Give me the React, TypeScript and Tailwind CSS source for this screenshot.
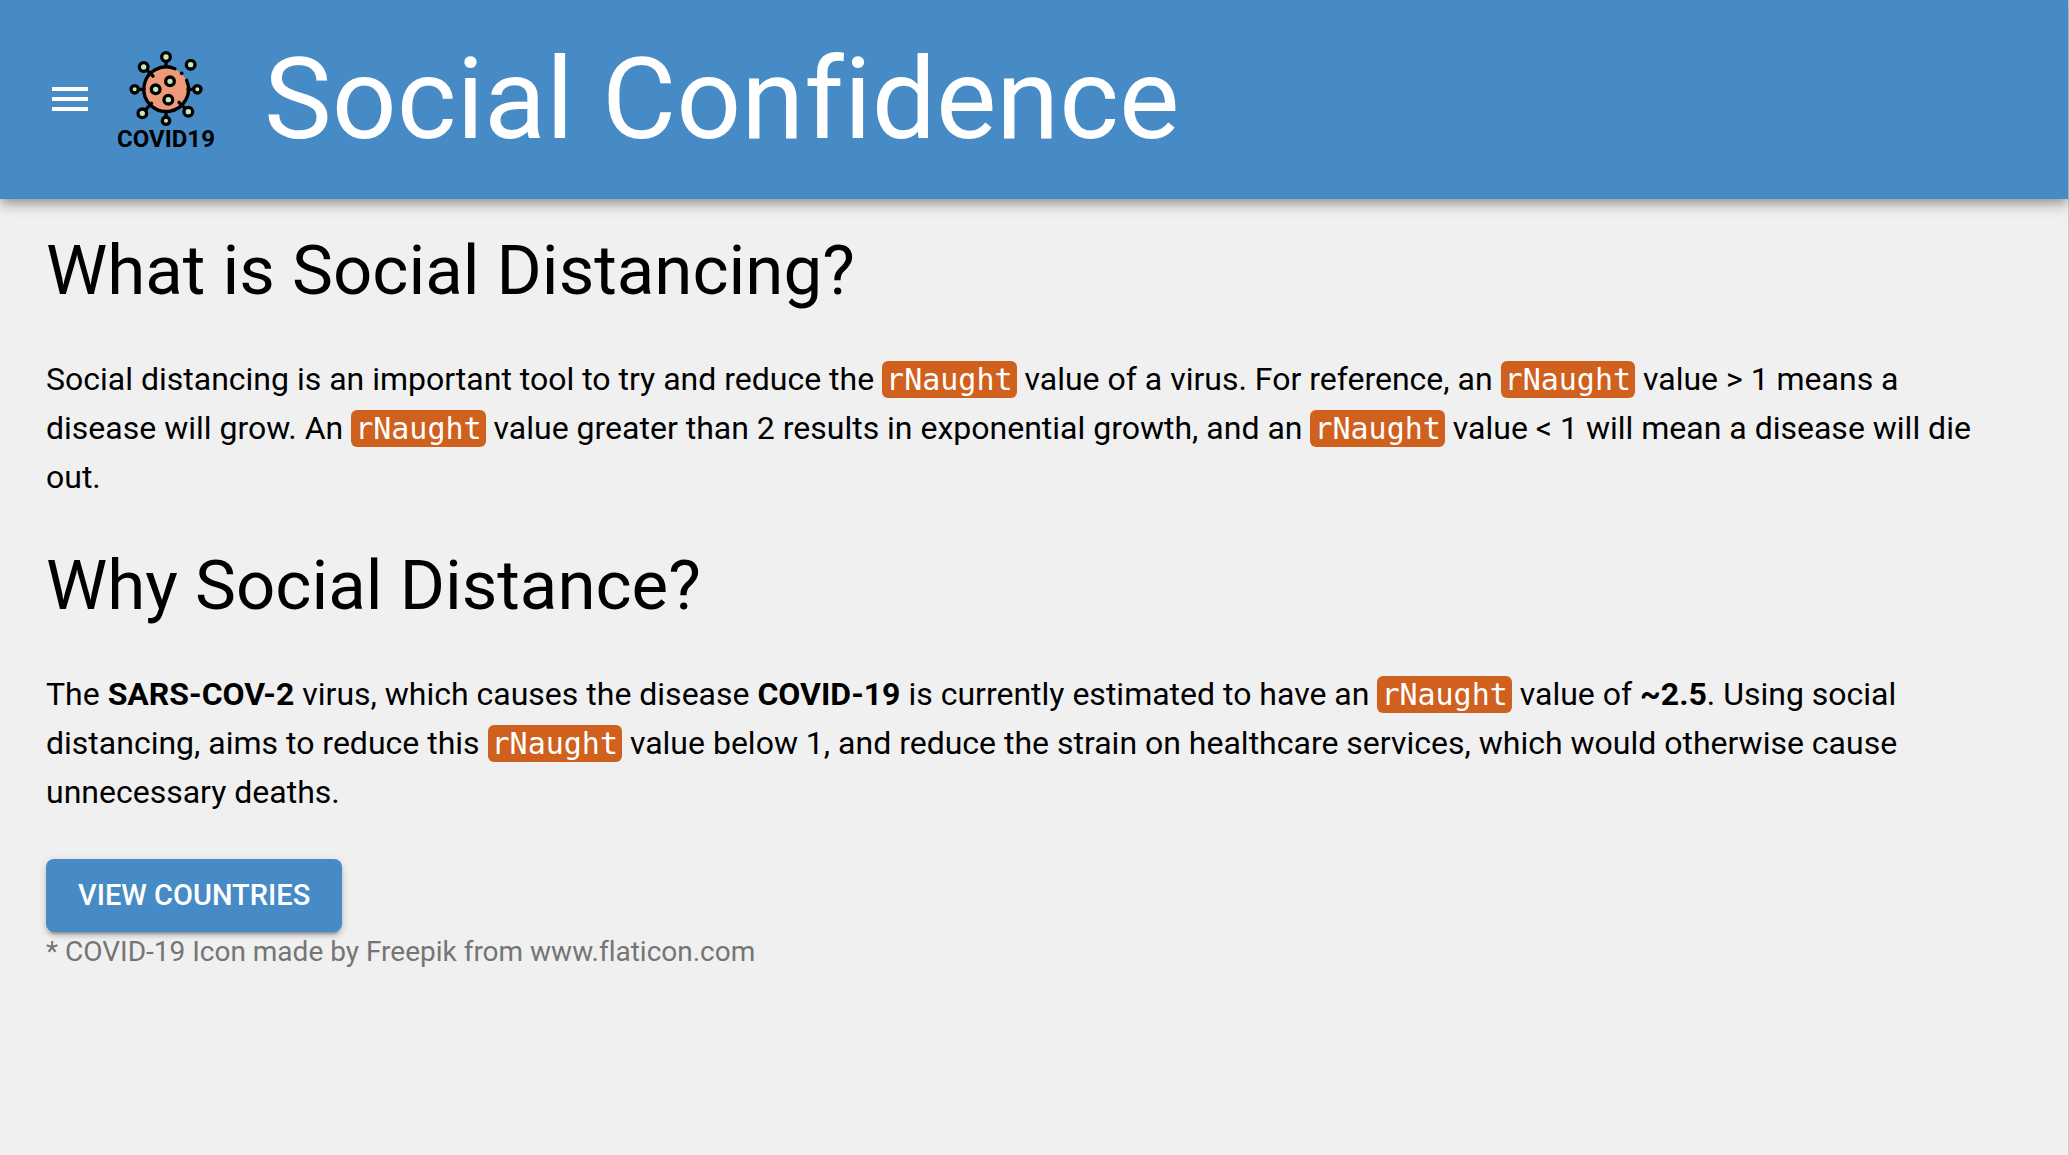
import type { ReactNode } from "react";

const SPIKES: [number, number, number, number, number, number, number][] = [
  // cx, cy, radius, stem x1, y1, x2, y2
  [408, 81, 13, 408, 96, 408, 110],
  [341, 111, 13, 350, 120, 369, 138],
  [482, 104, 13, 482, 104, 482, 104],
  [314, 178, 11, 326, 178, 342, 178],
  [502, 178, 11, 474, 178, 490, 178],
  [337, 250, 13, 346, 240, 365, 220],
  [475, 245, 13, 447, 217, 466, 236],
  [408, 272, 11, 408, 246, 408, 260],
];

function CovidLogo() {
  return (
    <svg className="size-24 shrink-0 overflow-visible" viewBox="264 63 288 288" role="img" aria-label="COVID19">
      <circle cx="408" cy="178" r="66" fill="#ee9a7a" />
      <g fill="none" stroke="#000" strokeWidth="10" strokeLinecap="round">
        <path d="M435 116 A67 67 0 1 0 470 151" />
        {SPIKES.map(([cx, cy, , x1, y1, x2, y2]) => (
          <path key={`${cx}-${cy}`} d={`M${x1} ${y1}L${x2} ${y2}`} />
        ))}
      </g>
      <circle cx="455" cy="130" r="5.5" />
      <g fill="#c5e8bf" stroke="#000" strokeWidth="10">
        {SPIKES.map(([cx, cy, r]) => (
          <circle key={`${cx}-${cy}`} cx={cx} cy={cy} r={r} />
        ))}
        <circle cx="420" cy="154" r="13" />
        <circle cx="377" cy="178" r="13" />
        <circle cx="415" cy="209" r="13" />
      </g>
      <text
        x="408"
        y="350"
        textAnchor="middle"
        className="font-['Roboto',sans-serif] text-[72px] font-bold"
      >
        COVID19
      </text>
    </svg>
  );
}

function Code({ children }: { children: ReactNode }) {
  return (
    <code className="rounded-md bg-[#d0601e] px-1 py-px font-['DejaVu_Sans_Mono',monospace] text-[30px] leading-none text-white">
      {children}
    </code>
  );
}

function Section({ title, children }: { title: string; children: ReactNode }) {
  return (
    <section className="flex flex-col gap-[42px]">
      <h2 className="text-[69px] leading-[84px]">{title}</h2>
      <p className="text-[32px] leading-[49px]">{children}</p>
    </section>
  );
}

export default function App() {
  return (
    <div className="min-h-screen border-r border-[#cccccc] bg-[#f0f0f0] font-['Roboto',sans-serif] text-black [font-variant-ligatures:none]">
      <header className="relative flex h-[199px] items-center bg-[#468bc5] pb-px pl-[46px] text-white shadow-[0_4px_8px_-2px_rgba(0,0,0,0.2),0_8px_10px_0_rgba(0,0,0,0.14),0_2px_20px_0_rgba(0,0,0,0.12)]">
        <button type="button" aria-label="Open menu" className="mr-6">
          <svg className="size-12" viewBox="0 0 24 24" fill="currentColor" aria-hidden="true">
            <path d="M3 18h18v-2H3v2zm0-5h18v-2H3v2zm0-7v2h18V6H3z" />
          </svg>
        </button>
        <CovidLogo />
        <h1 className="ml-[50px] text-[114px] leading-[132px]">Social Confidence</h1>
      </header>

      <main className="flex flex-col items-start pt-[30px] pr-16 pl-[46px]">
        <div className="flex flex-col gap-[42px]">
          <Section title="What is Social Distancing?">
            Social distancing is an important tool to try and reduce the <Code>rNaught</Code> value of a virus. For
            reference, an <Code>rNaught</Code> value &gt; 1 means a disease will grow. An <Code>rNaught</Code> value
            greater than 2 results in exponential growth, and an <Code>rNaught</Code> value &lt; 1 will mean a disease
            will die out.
          </Section>
          <Section title="Why Social Distance?">
            The <b>SARS-COV-2</b> virus, which causes the disease <b>COVID-19</b> is currently estimated to have an{" "}
            <Code>rNaught</Code> value of <b>~2.5</b>. Using social distancing, aims to reduce this{" "}
            <Code>rNaught</Code> value below 1, and reduce the strain on healthcare services, which would otherwise
            cause unnecessary deaths.
          </Section>
        </div>
        <button
          type="button"
          className="mt-[42px] rounded-lg bg-[#468bc5] px-8 py-3 text-[29px] leading-[49px] font-medium text-white uppercase shadow-[0_6px_2px_-4px_rgba(0,0,0,0.2),0_4px_4px_0_rgba(0,0,0,0.14),0_2px_10px_0_rgba(0,0,0,0.12)]"
        >
          View Countries
        </button>
        <p className="text-[28px] leading-10 text-[#757575]">* COVID-19 Icon made by Freepik from www.flaticon.com</p>
      </main>
    </div>
  );
}
